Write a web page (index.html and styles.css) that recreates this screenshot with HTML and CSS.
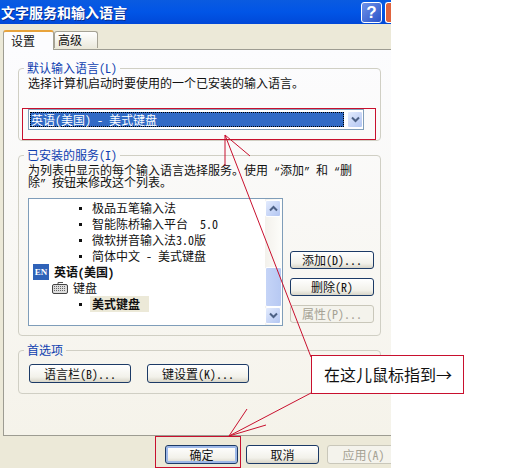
FILE: index.html
```html
<!DOCTYPE html>
<html lang="zh-CN">
<head>
    <meta charset="UTF-8">
    <title>文字服务和输入语言</title>
    <link rel="stylesheet" href="styles.css">
</head>
<body>

<div class="dialog">
    <div class="titlebar">
        <span class="title-text">文字服务和输入语言</span>
        <span class="help-btn">?</span>
        <span class="close-btn"></span>
    </div>

    <div class="tabs">
        <span class="tab tab-active">设置</span>
        <span class="tab">高级</span>
    </div>

    <div class="panel">
        <fieldset class="group group-default">
            <legend>默认输入语言(L)</legend>
            <p class="group-text">选择计算机启动时要使用的一个已安装的输入语言。</p>
            <div class="combo">
                <span class="combo-value">英语(美国) - 美式键盘</span>
                <span class="arrow-btn">
                    <svg width="9" height="7" viewBox="0 0 9 7"><path d="M1 1.5l3.5 3.5 3.5-3.5" fill="none" stroke="#4d6185" stroke-width="2"/></svg>
                </span>
            </div>
        </fieldset>

        <fieldset class="group group-services">
            <legend>已安装的服务(I)</legend>
            <p class="group-text">为列表中显示的每个输入语言选择服务。使用 <span class="quote">“</span>添加<span class="quote">”</span> 和 <span class="quote">“</span>删<br>除<span class="quote">”</span> 按钮来修改这个列表。</p>
            <div class="services-row">
                <div class="listbox">
                    <ul class="tree">
                        <li class="leaf">极品五笔输入法</li>
                        <li class="leaf">智能陈桥输入平台&nbsp;&nbsp;5.0</li>
                        <li class="leaf">微软拼音输入法3.0版</li>
                        <li class="leaf">简体中文 - 美式键盘</li>
                        <li class="lang"><span class="en-icon">EN</span>英语(美国)</li>
                        <li class="kbd">
                            <svg class="kbd-icon" width="16" height="14" viewBox="0 0 16 14">
                                <path d="M6 3V1.5h5" fill="none" stroke="#555"/>
                                <rect x="0.5" y="3.5" width="15" height="9" rx="1.5" fill="#ddd" stroke="#444"/>
                                <path d="M2 5.5h12M2 7.5h12M2 9.5h12" stroke="#666" stroke-dasharray="1 1"/>
                            </svg>键盘
                        </li>
                        <li class="leaf leaf-current"><span class="current">美式键盘</span></li>
                    </ul>
                    <div class="scrollbar">
                        <span class="arrow-btn">
                            <svg width="9" height="7" viewBox="0 0 9 7"><path d="M1 5.5l3.5-3.5 3.5 3.5" fill="none" stroke="#4d6185" stroke-width="2"/></svg>
                        </span>
                        <span class="scroll-track"></span>
                        <span class="scroll-thumb"></span>
                        <span class="arrow-btn">
                            <svg width="9" height="7" viewBox="0 0 9 7"><path d="M1 1.5l3.5 3.5 3.5-3.5" fill="none" stroke="#4d6185" stroke-width="2"/></svg>
                        </span>
                    </div>
                </div>
                <div class="side-buttons">
                    <button class="btn btn-side">添加(D)...</button>
                    <button class="btn btn-side">删除(R)</button>
                    <button class="btn btn-side btn-disabled">属性(P)...</button>
                </div>
            </div>
        </fieldset>

        <fieldset class="group group-prefs">
            <legend>首选项</legend>
            <div class="prefs-row">
                <button class="btn btn-pref">语言栏(B)...</button>
                <button class="btn btn-pref">键设置(K)...</button>
            </div>
        </fieldset>
    </div>

    <div class="footer">
        <button class="btn btn-footer btn-default">确定</button>
        <button class="btn btn-footer">取消</button>
        <button class="btn btn-footer btn-disabled">应用(A)</button>
    </div>
</div>

<!-- red annotations drawn over the screenshot -->
<svg class="annotations" width="512" height="468" viewBox="0 0 512 468">
    <g fill="none" stroke="#c8102e" stroke-width="1">
        <rect x="22.5" y="108.5" width="353" height="31"/>
        <rect x="155.5" y="436.5" width="85" height="31"/>
        <path d="M225 135L311 357M225 135V166M225 135L250 156"/>
        <path d="M229 436L311 393M229 436L247 409M229 436L266 425"/>
    </g>
</svg>
<div class="callout">在这儿鼠标指到→</div>

</body>
</html>
```

FILE: styles.css
```css
* {
    box-sizing: border-box;
}

body {
    margin: 0;
    background-color: #ffffff;
    font-family: "Noto Sans Mono CJK SC", "Noto Sans CJK SC", "Liberation Sans", sans-serif;
    font-size: 12px;
    color: #111111;
}

.dialog {
    width: 391px;
    height: 468px;
    display: flex;
    flex-direction: column;
    background-color: #ece9d8;
    overflow: hidden;
}

.titlebar {
    height: 24px;
    flex: none;
    display: flex;
    align-items: center;
    background: linear-gradient(#0a5be0, #0155e6 50%, #0048d8);
}

.title-text {
    flex: 1;
    padding-left: 1px;
    color: #ffffff;
    font-size: 14px;
    font-weight: bold;
    line-height: 22px;
    text-shadow: 1px 1px 0 #0b2f90;
}

.help-btn {
    width: 21px;
    height: 21px;
    margin-right: 3px;
    border: 1px solid #ffffff;
    border-radius: 3px;
    background: linear-gradient(135deg, #6f93ea, #2a52c8);
    color: #ffffff;
    font: bold 17px/19px "Liberation Sans", sans-serif;
    text-align: center;
}

.close-btn {
    width: 6px;
    height: 21px;
    border: 1px solid #ffffff;
    border-right: none;
    border-radius: 3px 0 0 3px;
    background: #e0633e;
}

.tabs {
    height: 25px;
    flex: none;
    display: flex;
    align-items: flex-end;
    padding-left: 3px;
    position: relative;
    z-index: 1;
}

.tab {
    width: 44px;
    height: 17px;
    margin-bottom: 1px;
    padding-right: 12px;
    border: 1px solid #a5a294;
    border-bottom: none;
    border-radius: 3px 3px 0 0;
    background: linear-gradient(#ffffff, #ebe9dc);
    text-align: center;
    line-height: 16px;
}

.tab-active {
    width: 51px;
    height: 20px;
    margin-bottom: -1px;
    border-top: 2px solid #e8a33c;
    background: #fcfcfe;
    padding-right: 11px;
    line-height: 18px;
}

.panel {
    height: 387px;
    flex: none;
    margin-left: 3px;
    padding: 11px 9px 0 14px;
    border: 1px solid #9d9c92;
    border-right: none;
    background: linear-gradient(#fcfcfe, #f5f3ea);
}

.group {
    width: 363px;
    margin: 0 0 7px;
    padding: 0 6px 0 9px;
    border: 1px solid #d0cfc4;
    border-radius: 4px;
    min-width: 0;
}

.group legend {
    margin-left: -4px;
    padding: 0 3px;
    color: #0f3fb0;
    line-height: 14px;
}

.group-default {
    height: 80px;
}

.group-services {
    height: 188px;
}

.group-prefs {
    height: 51px;
}

.group-text {
    margin: 2px 0 0;
    line-height: 12px;
    white-space: nowrap;
}

.quote {
    font-family: "Liberation Mono", monospace;
    font-size: 10px;
    line-height: 0;
}

.combo {
    width: 336px;
    height: 21px;
    margin-top: 20px;
    display: flex;
    align-items: center;
    gap: 3px;
    padding: 0 0 0 1px;
    border: 1px solid #7f9db9;
    background: #ffffff;
}

.combo-value {
    width: 314px;
    height: 15px;
    border: 1px dotted #000000;
    background: #316ac5;
    color: #ffffff;
    line-height: 13px;
}

.arrow-btn {
    width: 16px;
    height: 17px;
    flex: none;
    display: flex;
    align-items: center;
    justify-content: center;
    border: 1px solid #ffffff;
    border-radius: 2px;
    background: linear-gradient(135deg, #e3ebfd, #b3c6f2);
}

.services-row {
    display: flex;
    gap: 7px;
    margin-top: 10px;
}

.listbox {
    width: 255px;
    height: 128px;
    flex: none;
    display: flex;
    border: 1px solid #7f9db9;
    background: #ffffff;
}

.tree {
    flex: 1;
    margin: 0;
    padding: 1px 0 0;
    list-style: none;
}

.tree li {
    height: 16px;
    line-height: 16px;
    display: flex;
    align-items: center;
}

.leaf {
    padding-left: 50px;
}

.leaf::before {
    content: "";
    width: 3px;
    height: 3px;
    margin-right: 10px;
    background: #111111;
}

.lang {
    padding-left: 4px;
    font-weight: bold;
}

.en-icon {
    width: 16px;
    height: 16px;
    margin-right: 5px;
    background: #2f62b8;
    color: #ffffff;
    font: bold 9px/16px "Liberation Serif", serif;
    text-align: center;
}

.kbd {
    padding-left: 23px;
}

.kbd-icon {
    margin-right: 5px;
}

.leaf-current {
    font-weight: bold;
}

.current {
    padding: 0 9px 0 2px;
    margin-left: -2px;
    background: #ece9d8;
}

.scrollbar {
    width: 17px;
    flex: none;
    display: flex;
    flex-direction: column;
    padding: 1px 0;
    background: linear-gradient(90deg, #f3f1ec, #fdfdfa);
}

.scroll-track {
    flex: 1;
}

.scroll-thumb {
    height: 40px;
    border: 1px solid #ffffff;
    border-radius: 2px;
    background: linear-gradient(90deg, #c5d4f7, #b7c9f3);
}

.side-buttons {
    display: flex;
    flex-direction: column;
    gap: 9px;
    margin-top: 53px;
}

.btn {
    padding: 0;
    border: 1px solid #1c3a66;
    border-radius: 3px;
    background: linear-gradient(#ffffff, #f2f1ea 70%, #d8d5c8);
    color: #111111;
    font: inherit;
    line-height: 14px;
}

.btn-side {
    width: 84px;
    height: 18px;
}

.btn-disabled {
    border-color: #c9c7ba;
    background: #f4f3ec;
    color: #a5a294;
}

.prefs-row {
    display: flex;
    gap: 16px;
    margin-top: 7px;
    padding-left: 1px;
}

.btn-pref {
    width: 102px;
    height: 19px;
}

.footer {
    flex: 1;
    display: flex;
    gap: 8px;
    padding: 9px 0 0 165px;
}

.btn-footer {
    width: 73px;
    height: 19px;
    flex: none;
}

.btn-default {
    box-shadow: inset 0 0 0 2px #9db8e8;
}

.annotations {
    position: absolute;
    left: 0;
    top: 0;
}

.callout {
    position: absolute;
    left: 311px;
    top: 355px;
    width: 153px;
    height: 39px;
    padding-left: 12px;
    border: 1px solid #c8102e;
    background: #ffffff;
    font-size: 16px;
    line-height: 37px;
}
```
